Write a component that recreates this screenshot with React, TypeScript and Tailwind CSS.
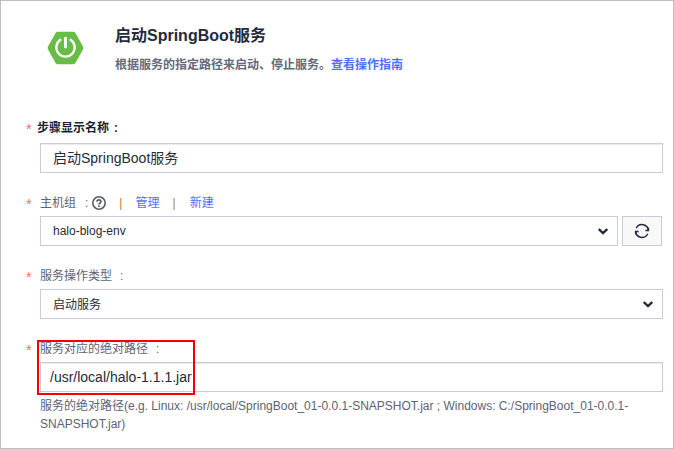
import type { ReactNode } from "react";

function Label({ children, dark }: { children: ReactNode; dark?: boolean }) {
  return (
    <div className="flex h-5 items-center text-[12px] leading-5">
      <span className={"w-[12px] shrink-0 pl-px text-[15px] font-medium text-[#f66f6a] " + (dark ? "mr-0 pt-[3px]" : "mr-[3px] pt-px")}>*</span>
      <div className={"flex items-center whitespace-pre " + (dark ? "pt-[2px] font-bold text-[#191f2e]" : "text-[#5e6373]")}>{children}</div>
    </div>
  );
}

function Chevron() {
  return (
    <svg width="10" height="7" viewBox="0 0 10 7" fill="none" stroke="#252b3a" strokeWidth="2.4" className="mt-px">
      <path d="M0.8 1 L5 5.1 L9.2 1" />
    </svg>
  );
}

function SpringLogo() {
  return (
    <svg width="37" height="34" viewBox="0 0 37 34" className="mt-[30px] shrink-0">
      <path
        d="M11 0.8H26Q27.6 0.8 28.4 2.1L36 15.6Q36.8 17 36 18.4L28.4 31.9Q27.6 33.2 26 33.2H11Q9.4 33.2 8.6 31.9L1 18.4Q0.2 17 1 15.6L8.6 2.1Q9.4 0.8 11 0.8Z"
        fill="#68bd45"
      />
      <path d="M13.4 8.8A9.2 9.2 0 1 0 23.6 8.8" fill="none" stroke="#fff" strokeWidth="2.3" strokeLinecap="round" />
      <path d="M18.5 7.2V16" stroke="#fff" strokeWidth="2.8" strokeLinecap="round" />
    </svg>
  );
}

function HelpIcon() {
  return (
    <svg width="14" height="14" viewBox="0 0 14 14" fill="none" stroke="#575d6c">
      <circle cx="7" cy="7" r="6.2" strokeWidth="1.6" />
      <path d="M5 5.7C5 3.3 9 3.3 9 5.6C9 7 7 6.9 7 8.5" strokeWidth="1.7" />
      <path d="M7 9.4V11" strokeWidth="1.8" />
    </svg>
  );
}

function RefreshIcon() {
  return (
    <svg width="16" height="16" viewBox="0 0 16 16" fill="none" stroke="#252b3a" strokeWidth="1.5">
      <path d="M2.3 5.2A6.3 6.3 0 0 1 14.3 7.6" />
      <path d="M13.7 10.8A6.3 6.3 0 0 1 1.7 8.4" />
      <path d="M11.4 7.4H14.4V4.8" />
      <path d="M4.6 8.6H1.6V11.2" />
    </svg>
  );
}

export default function App() {
  return (
    <main className="relative h-[449px] w-[674px] overflow-hidden border border-[#bfbfbf] bg-white font-['Liberation_Sans','Noto_Sans_CJK_SC',sans-serif] text-[#252b3a]">
      <header className="flex h-[116px] pl-[46px]">
        <SpringLogo />
        <div className="ml-[31px] pt-[23px]">
          <h1 className="text-[16px] leading-6 font-bold">启动SpringBoot服务</h1>
          <p className="mt-[7px] text-[12px] leading-5 font-bold text-[#656a79]">
            根据服务的指定路径来启动、停止服务。<a className="text-[#526eff]">查看操作指南</a>
          </p>
        </div>
      </header>
      <form className="pl-[24px]">
        <Label dark>步骤显示名称<span className="ml-[5px] font-bold">:</span></Label>
        <div className="mt-[6px] ml-[15px] flex h-[30px] w-[623px] items-center border border-[#c9cbd8] pl-3 text-[14px] shadow-[inset_0_1px_0_#ececf1]">
          启动SpringBoot服务
        </div>

        <div className="mt-[20px]">
          <Label>
            主机组<span className="mr-[4px] ml-[9px]">:</span>
            <HelpIcon />
            <span className="ml-[13px] text-[#b5793f]">|</span>
            <a className="ml-[13px] text-[#526eff]">管理</a>
            <span className="ml-[13px] text-[#b5793f]">|</span>
            <a className="ml-[14px] text-[#526eff]">新建</a>
          </Label>
        </div>
        <div className="mt-[3px] ml-[15px] flex gap-1">
          <div className="flex h-[30px] w-[578px] items-center justify-between border border-[#c9cbd8] pr-[9px] pl-3 text-[12px]">
            halo-blog-env
            <Chevron />
          </div>
          <button type="button" className="flex h-[30px] w-[40px] items-center justify-center border border-[#c9cbd8] bg-[#f8f8f8]">
            <RefreshIcon />
          </button>
        </div>

        <div className="mt-[20px]">
          <Label>服务操作类型<span className="ml-[8px]">:</span></Label>
        </div>
        <div className="mt-[3px] ml-[15px] flex h-[30px] w-[623px] items-center justify-between border border-[#c9cbd8] pr-[9px] pl-3 text-[12px]">
          <span className="pt-px">启动服务</span>
          <Chevron />
        </div>

        <div className="mt-[20px]">
          <Label>服务对应的绝对路径<span className="ml-[8px]">:</span></Label>
        </div>
        <div className="mt-[3px] ml-[15px] flex h-[30px] w-[623px] items-center border border-[#c9cbd8] pl-[9px] text-[14px] shadow-[inset_0_1px_0_#ececf1]">
          /usr/local/halo-1.1.1.jar
        </div>
        <p className="mt-[5px] ml-[15px] text-[12px] leading-[18px] text-[#5e6373]">
          服务的绝对路径(e.g. Linux: /usr/local/SpringBoot_01-0.0.1-SNAPSHOT.jar ; Windows: C:/SpringBoot_01-0.0.1-
          <br />
          SNAPSHOT.jar)
        </p>
      </form>
      <div className="pointer-events-none absolute top-[339px] left-[36px] h-[55px] w-[158px] border-2 border-[#f80000]" />
    </main>
  );
}
